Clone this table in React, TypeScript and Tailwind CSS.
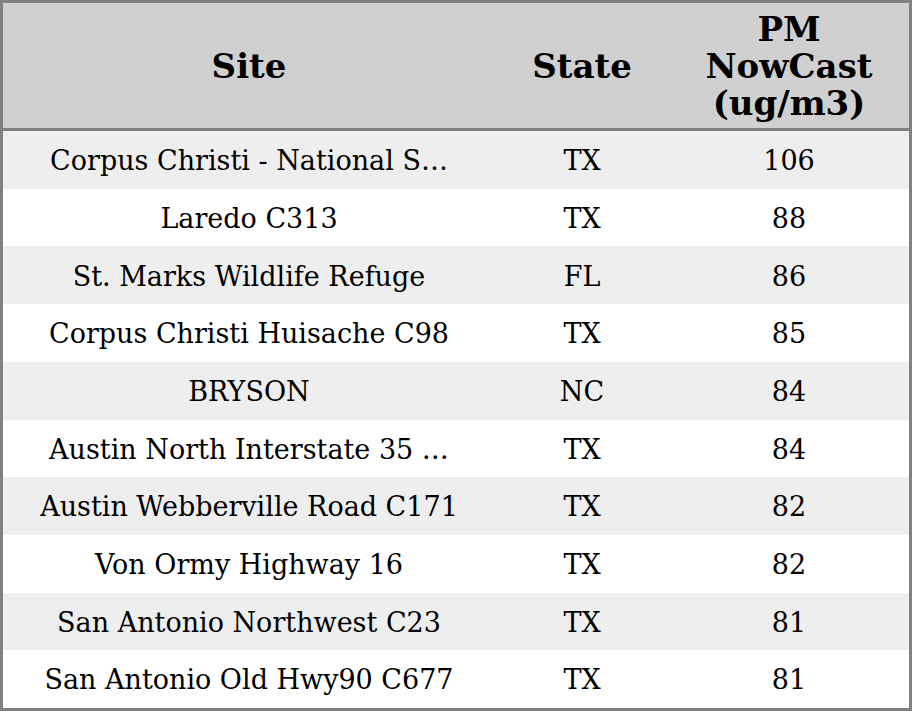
const rows = [
  { site: 'Corpus Christi - National S…', state: 'TX', pm: 106 },
  { site: 'Laredo C313', state: 'TX', pm: 88 },
  { site: 'St. Marks Wildlife Refuge', state: 'FL', pm: 86 },
  { site: 'Corpus Christi Huisache C98', state: 'TX', pm: 85 },
  { site: 'BRYSON', state: 'NC', pm: 84 },
  { site: 'Austin North Interstate 35 …', state: 'TX', pm: 84 },
  { site: 'Austin Webberville Road C171', state: 'TX', pm: 82 },
  { site: 'Von Ormy Highway 16', state: 'TX', pm: 82 },
  { site: 'San Antonio Northwest C23', state: 'TX', pm: 81 },
  { site: 'San Antonio Old Hwy90 C677', state: 'TX', pm: 81 },
];

export default function App() {
  return (
    <div
      className="w-[912px] h-[711px] border-[3px] border-[#808080] flex flex-col bg-white text-black"
      style={{ fontFamily: '"DejaVu Serif", serif' }}
    >
      <div className="h-[128px] shrink-0 flex bg-[#d0d0d0] border-b-[3px] border-[#808080] font-bold text-[34px] leading-[37px] pt-[2px]">
        <div className="w-[492px] flex items-center justify-center text-center">Site</div>
        <div className="w-[174px] flex items-center justify-center text-center">State</div>
        <div className="flex-1 flex items-center justify-center text-center">
          PM
          <br />
          NowCast
          <br />
          (ug/m3)
        </div>
      </div>
      {rows.map((r, i) => (
        <div
          key={i}
          className={`flex-1 flex items-center text-[27px] pt-[3px] ${i % 2 === 0 ? 'bg-[#eeeeee]' : 'bg-white'}`}
        >
          <div className="w-[492px] text-center whitespace-nowrap">{r.site}</div>
          <div className="w-[174px] text-center">{r.state}</div>
          <div className="flex-1 text-center">{r.pm}</div>
        </div>
      ))}
    </div>
  );
}
